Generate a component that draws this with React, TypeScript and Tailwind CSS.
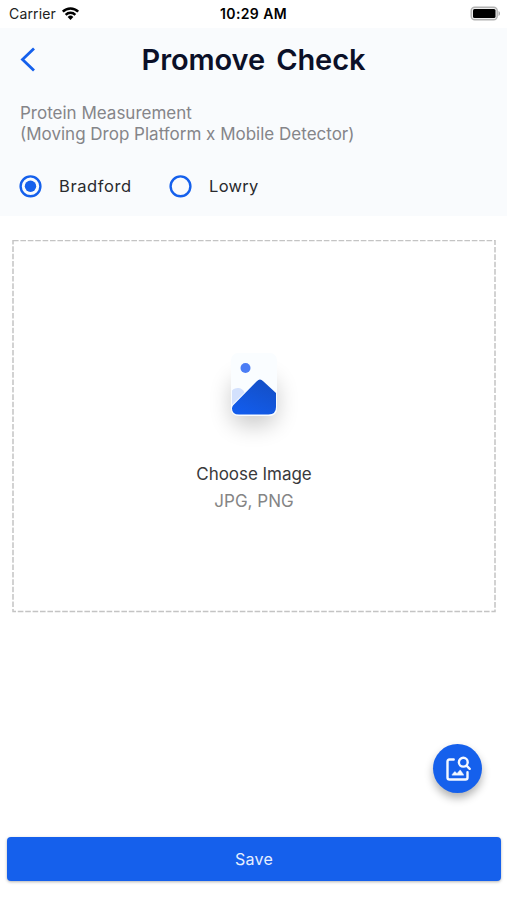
function Wifi() {
  return (
    <svg width="19" height="16" viewBox="0 0 20 16" fill="none" stroke="#000" strokeWidth="2.600">
      <path d="M1.900 5.600a11.500 11.500 0 0 1 16.200 0" />
      <path d="M4.900 8.800a7.300 7.300 0 0 1 10.200 0" />
      <path d="M10 14.200 7 11.100a4.300 4.300 0 0 1 6 0Z" fill="#000" stroke="none" />
    </svg>
  );
}

function Battery() {
  return (
    <svg width="32" height="16" viewBox="0 0 32 16">
      <rect x="1.200" y="1.200" width="26" height="12.600" rx="3.500" fill="#eee" stroke="#b2b2b2" strokeWidth="1.400" />
      <rect x="3" y="3" width="22.500" height="9" rx="1.500" fill="#000" />
      <path d="M28.500 5c2 .8 2 4.200 0 5Z" fill="#a8a8a8" />
    </svg>
  );
}

function Radio({ checked, label, className }: { checked: boolean; label: string; className: string }) {
  return (
    <div className="flex items-center" role="radio" aria-checked={checked}>
      <svg width="23" height="23" viewBox="0 0 23 23" fill="none">
        <circle cx="11.500" cy="11.300" r="9.900" stroke="#1560ec" strokeWidth="2.400" />
        {checked && <circle cx="11.500" cy="11.300" r="5.700" fill="#1560ec" />}
      </svg>
      <span className={className}>{label}</span>
    </div>
  );
}

function ImageIcon() {
  return (
    <svg width="120" height="120" viewBox="0 0 120 120">
      <defs>
        <linearGradient id="hill" x1="0.8" y1="0.1" x2="0.3" y2="1">
          <stop offset="0" stopColor="#1450c8" />
          <stop offset="1" stopColor="#125cec" />
        </linearGradient>
        <filter id="soft" x="-60%" y="-60%" width="220%" height="220%">
          <feGaussianBlur stdDeviation="11" />
        </filter>
      </defs>
      <rect x="37" y="48" width="46" height="48" rx="14" fill="#000" opacity="0.2" filter="url(#soft)" />
      <rect x="37" y="23" width="46" height="63" rx="7" fill="#fafdff" />
      <path d="M38 60.500a7.500 7.500 0 0 1 12.500 2L38 75Z" fill="#d3e1fd" />
      <circle cx="51.500" cy="38" r="5" fill="#4b7df5" />
      <path d="M39 75.500 62.800 51.200q3.200-3.200 6.400 0L82 63V77q0 7.500-7.500 7.500H45q-7 0-7-6 0-1.600 1-3Z" fill="url(#hill)" />
    </svg>
  );
}

function ImageSearch() {
  return (
    <svg width="26" height="26" viewBox="0 0 26 26" fill="none" stroke="#f4f8ff" strokeWidth="2.400" strokeLinecap="round" strokeLinejoin="round">
      <path d="M8.700 3.500H4.500q-2 0-2 2v16q0 2 2 2h16q2 0 2-2V16.200" />
      <circle cx="18.300" cy="6.200" r="4.400" />
      <path d="m21.500 9.600 3.200 3.200" />
      <path d="M7.200 19v-.5l2.600-3 2.200 2 3.200-3.600 3.300 4.600v.5Z" fill="#f4f8ff" strokeWidth="0.500" />
    </svg>
  );
}

export default function App() {
  return (
    <div className="flex h-[900px] w-[507px] flex-col overflow-hidden bg-white font-['Inter','Liberation_Sans',sans-serif]">
      <div className="grid h-7 shrink-0 grid-cols-3 items-center pr-[5px] pl-[9px] text-sm text-[#222]">
        <div className="flex items-center gap-[5px]">
          <span className="text-[14px] tracking-[0.15px]">Carrier</span>
          <Wifi />
        </div>
        <span className="-ml-[4px] text-center text-[14px] font-semibold tracking-[0.4px] whitespace-nowrap text-black">10:29 AM</span>
        <div className="flex justify-end"><Battery /></div>
      </div>

      <header className="h-[188px] shrink-0 bg-[#f9fbfd]">
        <div className="grid h-[64px] grid-cols-[60px_1fr_60px] items-center">
          <svg className="ml-5" width="17" height="26" viewBox="0 0 17 26" fill="none" stroke="#1560ec" strokeWidth="2.800">
            <path d="M14 1.500 2.500 12.500 14 23.500" />
          </svg>
          <h1 className="text-center text-[29px] font-semibold tracking-[-0.1px] [word-spacing:4px] whitespace-nowrap text-[#0b1028]">Promove Check</h1>
        </div>
        <p className="mt-[11px] ml-[20px] text-[17px] leading-[21px] whitespace-nowrap text-[#858589]">
          Protein Measurement
          <br />
          (Moving Drop Platform x Mobile Detector)
        </p>
        <div className="mt-[30px] ml-[19px] flex gap-[37px]" role="radiogroup">
          <Radio checked label="Bradford" className="ml-[17px] w-[73px] text-[16.500px] leading-[23px] tracking-[0.600px] text-[#292a2e]" />
          <Radio checked={false} label="Lowry" className="ml-[17px] text-[16.500px] leading-[23px] tracking-[0.300px] text-[#292a2e]" />
        </div>
      </header>

      <main className="flex grow flex-col">
        <section className="relative mt-[24px] mr-[11px] ml-[12px] flex h-[372px] flex-col items-center">
          <svg className="absolute inset-0" width="484" height="373" viewBox="0 0 484 373" fill="none" aria-hidden="true">
            <rect x="1" y="0.5" width="482" height="371" stroke="#c4c4c4" strokeWidth="1.500" strokeDasharray="5.600 1.800" />
          </svg>
          <div className="mt-[90px]"><ImageIcon /></div>
          <span className="mt-[13px] text-[17px] leading-[22px] tracking-[-0.050px] text-[#39393b]">Choose Image</span>
          <span className="mt-[5px] text-[17px] leading-[22px] text-[#858585]">JPG, PNG</span>
        </section>
        <button className="mt-[132px] mr-[25px] flex size-[49px] items-center justify-center self-end rounded-full bg-[#1560ec] shadow-[0_5px_9px_rgba(0,0,0,0.3)]" aria-label="Image search">
          <ImageSearch />
        </button>
        <button className="mt-[44px] mr-[6px] ml-[7px] h-[44px] rounded-[4px] bg-[#1560ec] text-[16px] tracking-[0.300px] text-[#e5efff] shadow-[0_1px_3px_rgba(0,0,0,0.3)]">Save</button>
      </main>
    </div>
  );
}
